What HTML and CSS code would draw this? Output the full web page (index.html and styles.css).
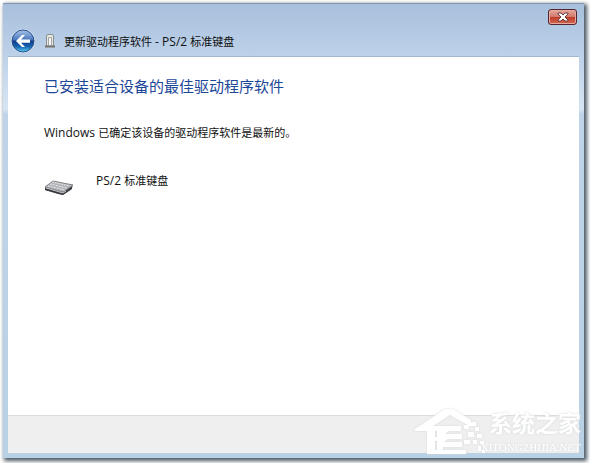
FILE: index.html
```
<!DOCTYPE html>
<html lang="zh-CN">
<head>
  <meta charset="UTF-8" />
  <meta name="viewport" content="width=device-width, initial-scale=1.0"/>
  <title>更新驱动程序软件 - PS/2 标准键盘</title>
  <link rel="stylesheet" href="styles.css">
</head>
<body>
  <div class="window">
    <div class="close-bar">
      <button class="close-button" aria-label="关闭">
        <svg width="12" height="10" viewBox="0 0 12 10">
          <path d="M1 1h3l2 2 2-2h3v1L8 5l3 3v1H8L6 7 4 9H1V8l3-3-3-3z" fill="#fff" stroke="#6d3c40" stroke-width="1"/>
        </svg>
      </button>
    </div>

    <div class="title-bar">
      <button class="back-button" aria-label="返回">
        <svg width="24" height="24" viewBox="0 0 24 24">
          <defs>
            <linearGradient id="ball" x1="0" y1="0" x2="0" y2="1">
              <stop offset="0" stop-color="#a9c4ea"/>
              <stop offset="0.45" stop-color="#4676bd"/>
              <stop offset="0.5" stop-color="#123d8b"/>
              <stop offset="0.75" stop-color="#1764b0"/>
              <stop offset="1" stop-color="#57d0f4"/>
            </linearGradient>
          </defs>
          <circle cx="12" cy="12" r="12" fill="#d8e7f5"/>
          <circle cx="12" cy="12" r="11" fill="url(#ball)" stroke="#2c5088" stroke-width="1"/>
          <path d="M5 12l6-6h3l-4 4.500h9v3.200h-9l4 4.300h-3z" fill="#fff"/>
        </svg>
      </button>
      <svg class="title-icon" width="10" height="16" viewBox="0 0 10 16">
        <path d="M1.500 13V3Q1.500 1.500 3 1.500h4Q8.500 1.500 8.500 3v10z" fill="#e9e9e4" stroke="#898d91"/>
        <path d="M3.500 12V4.500h3V12" fill="#f8f8f5" stroke="#a2a4a3"/>
        <path d="M0 13.500h10" stroke="#77736d" stroke-width="2"/>
      </svg>
      <span class="title-text">更新驱动程序软件<span class="latin"> - PS/2 </span>标准键盘</span>
    </div>

    <div class="content">
      <h1>已安装适合设备的最佳驱动程序软件</h1>
      <p><span class="latin">Windows </span>已确定该设备的驱动程序软件是最新的。</p>
      <div class="device">
        <svg width="30" height="18" viewBox="0 0 30 18">
          <path d="M1 8l8-6 20 4-1 3-9 7-5-1L1 11z" fill="#55565a"/>
          <path d="M1 8l8-6 20 4-10 7z" fill="#b3b4b7" stroke="#898a8e" stroke-width="1"/>
          <path d="M8 3l18 4M6 5l17 4M4 7l17 4" stroke="#e4e5e7" stroke-width="1" stroke-dasharray="2 1"/>
          <path d="M1 9l18 5 9-6v2l-9 6L1 11z" fill="#37383c"/>
          <path d="M2 9l17 5 3-2" fill="none" stroke="#c7c8ca"/>
        </svg>
        <span><span class="latin">PS/2 </span>标准键盘</span>
      </div>
    </div>

    <div class="footer"></div>

    <div class="watermark">
      <svg width="72" height="48" viewBox="0 0 72 48">
        <g fill="#fff">
          <path d="M0 23L30 3h8l18 11v7L35 9 18 20h17v5H20v6h9v4h-9v9h31v4H12V25H0z"/>
          <path d="M30 20h16v5H34l-4 3h17v5H33l-4 3h18v5H28v7h-6V25z"/>
          <path d="M49 19h5v4h-5zM56 16h5v4h-5zM60 21h4v4h-4zM53 26h6v5h-6zM62 28h5v4h-5zM49 34h6v4h-6zM58 34h4v4h-4zM65 35h4v3h-4zM63 40h3v5h-3zM67 44h3v3h-3z"/>
        </g>
      </svg>
      <div class="watermark-text">
        <span class="watermark-name">系统之家</span>
        <span class="watermark-site">XITONGZHIJIA.NET</span>
      </div>
    </div>
  </div>
</body>
</html>
```
FILE: styles.css
```
* {
  box-sizing: border-box;
}

body {
  margin: 0;
  padding: 3px 6px 5px 3px;
  height: 100vh;
  background-color: #fff;
  font-family: 'Open Sans', 'Noto Sans CJK SC', sans-serif;
  font-size: 11px;
  color: #111;
}

.latin {
  font-size: 12px;
  white-space: pre-wrap;
}

.window {
  position: relative;
  display: flex;
  flex-direction: column;
  height: 100%;
  padding: 0 5px 5px;
  border-top: 1px solid #8296ac;
  background: linear-gradient(to bottom, #a8c0dd 0, #bed2e9 54px, #d7e5f3 105px, #bfd4e8 110px, #b9d1e5 100%);
  box-shadow: 2px 2px 4px 1px #4b5964;
}

.close-bar {
  display: flex;
  justify-content: flex-end;
  height: 22px;
  padding-top: 5px;
}

.close-button {
  display: flex;
  align-items: center;
  justify-content: center;
  width: 29px;
  height: 16px;
  margin-right: 2px;
  padding: 0;
  border: 1px solid #54262f;
  border-radius: 3px;
  background: linear-gradient(to bottom, #e3a99f 0, #d4796c 48%, #bd3c2a 50%, #d5664d 100%);
  box-shadow: inset 0 0 0 1px #e5aaa0;
  cursor: pointer;
}

.title-bar {
  display: flex;
  align-items: center;
  height: 31px;
  padding: 0 3px;
  border-bottom: 1px solid #a3b8ce;
}

.back-button {
  display: flex;
  padding: 0;
  border: none;
  background: none;
  cursor: pointer;
}

.title-icon {
  margin: 0 9px 0 10px;
}

.content {
  flex: 1;
  padding: 18px 36px;
  background-color: #fff;
}

h1 {
  margin: 0;
  font-size: 15px;
  font-weight: normal;
  line-height: 22px;
  color: #1d4797;
}

p {
  margin: 28px 0 0;
  line-height: 16px;
}

.device {
  display: flex;
  gap: 22px;
  margin-top: 32px;
  line-height: 16px;
}

.device svg {
  margin-top: 6px;
}

.footer {
  height: 38px;
  border-top: 1px solid #dcdcdc;
  background-color: #efefef;
}

/* logo laid over the footer and the frame */
.watermark {
  position: absolute;
  right: 3px;
  bottom: 4px;
  display: flex;
  color: #fff;
  filter: drop-shadow(0 0 1px #d5d9dc);
}

.watermark-text {
  display: flex;
  flex-direction: column;
  align-items: flex-end;
  margin-left: -6px;
}

.watermark-name {
  font-size: 23px;
  font-weight: bold;
  line-height: 35px;
}

.watermark-site {
  font-family: 'Liberation Serif', serif;
  font-size: 11px;
  line-height: 12px;
}
```
